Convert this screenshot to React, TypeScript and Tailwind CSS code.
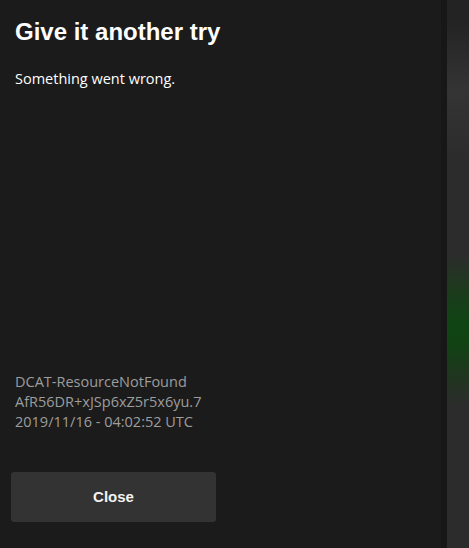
export default function App() {
  return (
    <div className="flex h-[548px] w-[469px] overflow-hidden bg-[#1b1b1b]">
      <div className="flex w-[441px] flex-col bg-[#1b1b1b] px-[15px]">
        <h1 className="mt-[17px] text-[24px] font-bold leading-[30px] text-white [font-family:'Liberation_Sans',sans-serif]">
          Give it another try
        </h1>
        <p className="mt-[22px] text-[14.5px] leading-[20px] text-white [font-family:'Open_Sans',sans-serif]">
          Something went wrong.
        </p>
        <div className="mt-auto text-[14.5px] leading-[20px] text-[#9d9d9d] [font-family:'Open_Sans',sans-serif]">
          <p>DCAT-ResourceNotFound</p>
          <p>AfR56DR+xJSp6xZ5r5x6yu.7</p>
          <p>2019/11/16 - 04:02:52 UTC</p>
        </div>
        <button className="-ml-[4px] mb-[26px] mt-[40px] h-[50px] w-[205px] rounded-[3px] bg-[#333333] text-[15px] font-bold text-[#f2f2f2] [font-family:'Liberation_Sans',sans-serif]">
          Close
        </button>
      </div>
      <div className="w-[6px] bg-[#171717]" />
      <div className="relative flex-1 bg-[#2c2c2c]">
        <div className="absolute inset-x-0 top-[0px] h-[40px] bg-[#232323]" />
        <div className="absolute inset-x-0 top-[20px] h-[140px] bg-[linear-gradient(to_bottom,#232323,#343434_50%,#2c2c2c)]" />
        <div className="absolute inset-x-0 top-[255px] h-[150px] bg-[linear-gradient(to_bottom,transparent,#1c3b1c_25%,#104414_45%,#124214_60%,#1e371e_78%,transparent)]" />
      </div>
    </div>
  );
}
